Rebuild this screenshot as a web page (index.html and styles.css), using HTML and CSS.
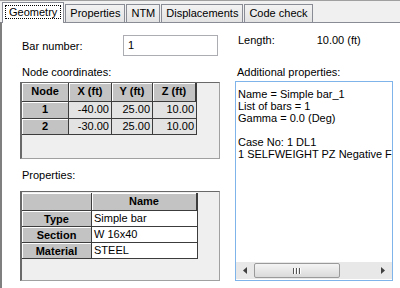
FILE: index.html
```html
<!DOCTYPE html>
<html lang="en">
<head>
    <meta charset="UTF-8">
    <title>Bar properties</title>
    <link rel="stylesheet" href="styles.css">
</head>
<body>
    <div id="win">
        <div id="tabs">
            <div class="tab sel"><span class="focus">Geometry</span></div>
            <div class="tab">Properties</div>
            <div class="tab">NTM</div>
            <div class="tab">Displacements</div>
            <div class="tab">Code check</div>
        </div>
        <div id="page">
            <div class="col left">
                <div class="barrow">
                    <span class="lbl">Bar number:</span>
                    <div class="edit">1</div>
                </div>
                <div class="cap">Node coordinates:</div>
                <div class="gridbox nodes">
                    <div class="grid g1">
                        <div class="hd">Node</div>
                        <div class="hd">X (ft)</div>
                        <div class="hd">Y (ft)</div>
                        <div class="hd">Z (ft)</div>
                        <div class="hd rh">1</div>
                        <div class="cell ro">-40.00</div>
                        <div class="cell ro">25.00</div>
                        <div class="cell ro">10.00</div>
                        <div class="hd rh">2</div>
                        <div class="cell ro">-30.00</div>
                        <div class="cell ro">25.00</div>
                        <div class="cell ro">10.00</div>
                    </div>
                </div>
                <div class="cap cap2">Properties:</div>
                <div class="gridbox props">
                    <div class="grid g2">
                        <div class="hd"></div>
                        <div class="hd">Name</div>
                        <div class="hd rh">Type</div>
                        <div class="cell txt">Simple bar</div>
                        <div class="hd rh">Section</div>
                        <div class="cell txt">W 16x40</div>
                        <div class="hd rh">Material</div>
                        <div class="cell txt">STEEL</div>
                    </div>
                </div>
            </div>
            <div class="col right">
                <div class="lenrow">
                    <span>Length:</span>
                    <span class="val">10.00 (ft)</span>
                </div>
                <div class="cap">Additional properties:</div>
                <div class="memo">
                    <div class="lines">Name = Simple bar_1
List of bars = 1
Gamma = 0.0 (Deg)

Case No: 1 DL1
1 SELFWEIGHT PZ Negative Fa</div>
                    <div class="hscroll">
                        <div class="arr">
                            <svg width="4" height="7" viewBox="0 0 4 7"><path d="M4 0 L0 3.5 L4 7 Z" fill="#404040"/></svg>
                        </div>
                        <div class="thumb">
                            <span class="grip"></span><span class="grip"></span><span class="grip"></span>
                        </div>
                        <div class="track"></div>
                        <div class="arr">
                            <svg width="4" height="7" viewBox="0 0 4 7"><path d="M0 0 L4 3.5 L0 7 Z" fill="#404040"/></svg>
                        </div>
                    </div>
                </div>
            </div>
        </div>
    </div>
</body>
</html>
```

FILE: styles.css
```css
body{
    margin: 0;
    background-color: #f0f0f0;
    font-family: "Liberation Sans", Arial, sans-serif;
    font-size: 11px;
    color: black;
}
#win{
    width: 400px;
    height: 288px;
    display: flex;
    flex-direction: column;
    border-top: 1px solid #a0a0a0;
    box-sizing: border-box;
}
#tabs{
    display: flex;
    align-items: flex-end;
    height: 21px;
    padding-left: 2px;
}
.tab{
    height: 17px;
    line-height: 17px;
    padding: 0 4px;
    border: 1px solid #898c95;
    border-bottom: none;
    margin-right: 1px;
    background: linear-gradient(#f2f2f2, #e3e3e3);
    white-space: nowrap;
}
.tab.sel{
    height: 20px;
    line-height: 19px;
    background: white;
    padding: 0 2px;
    position: relative;
    z-index: 1;
    margin-bottom: -1px;
}
.focus{
    border: 1px dotted black;
    padding: 0 3px;
}
#page{
    flex: 1;
    background: white;
    border-left: 2px solid #7f7f7f;
    border-top: 1px solid #898c95;
    display: flex;
    padding-left: 18px;
}
.col{
    display: flex;
    flex-direction: column;
}
.left{
    width: 200px;
}
.right{
    margin-left: 15px;
    width: 158px;
}
.barrow{
    display: flex;
    align-items: center;
    margin-top: 12px;
    height: 21px;
}
.lbl{
    width: 101px;
    padding-left: 2px;
}
.edit{
    width: 89px;
    height: 19px;
    line-height: 19px;
    border: 1px solid #abadb3;
    padding-left: 4px;
}
.cap{
    margin-top: 10px;
    padding-left: 2px;
    height: 13px;
    line-height: 13px;
}
.cap2{
    margin-top: 10px;
}
.gridbox{
    margin-top: 3px;
    border: 1px solid #a0a0a0;
    border-top-color: #696969;
    border-left: 2px solid #696969;
    background: #efefef;
    box-sizing: border-box;
}
.nodes{
    height: 77px;
}
.props{
    height: 90px;
    margin-top: 9px;
    padding-top: 1px;
}
.grid{
    display: grid;
    border-right: 1px solid #3c3c3c;
    justify-self: start;
    width: max-content;
}
.g1{
    grid-template-columns: 47px 43px 41px 43px;
    grid-template-rows: 19px 17px 16px;
}
.g2{
    grid-template-columns: 70px 105px;
    grid-template-rows: 18px 16px 16px 16px;
}
.hd{
    background: #c3c3c3;
    font-weight: bold;
    text-align: center;
    border-right: 1px solid #3c3c3c;
    border-bottom: 1px solid #3c3c3c;
    box-shadow: inset 1px 1px 0 white;
    line-height: 17px;
}
.hd.rh{
    line-height: 16px;
}
.g1 .hd.rh{
    line-height: 15px;
}
.cell{
    border-right: 1px solid #3c3c3c;
    border-bottom: 1px solid #3c3c3c;
    padding: 0 2px;
    line-height: 15px;
}
.ro{
    background: #e3e3e3;
    text-align: right;
}
.txt{
    background: white;
    text-align: left;
}
.grid .cell:nth-child(4n),
.g2 .cell{
    border-right: none;
}
.lenrow{
    display: flex;
    margin-top: 11px;
    height: 13px;
    line-height: 13px;
    padding-left: 3px;
}
.lenrow .val{
    margin-left: 42px;
}
.right .cap{
    margin-top: 19px;
}
.memo{
    margin-top: 2px;
    height: 200px;
    border: 1px solid #7eb4ea;
    box-sizing: border-box;
    display: flex;
    flex-direction: column;
    overflow: hidden;
}
.lines{
    flex: 1;
    white-space: pre;
    line-height: 12px;
    padding: 6px 0 0 2px;
    overflow: hidden;
}
.hscroll{
    height: 17px;
    margin: 0 0 1px 0;
    display: flex;
    align-items: center;
    background: #e8e8e8;
}
.arr{
    width: 18px;
    display: flex;
    justify-content: center;
}
.thumb{
    width: 86px;
    height: 15px;
    border: 1px solid #9a9a9a;
    border-radius: 2px;
    box-sizing: border-box;
    background: linear-gradient(#f4f4f4, #dadada);
    display: flex;
    justify-content: center;
    align-items: center;
    gap: 1px;
}
.grip{
    width: 1px;
    height: 6px;
    background: #555;
    border-right: 1px solid white;
}
.track{
    flex: 1;
}
```
